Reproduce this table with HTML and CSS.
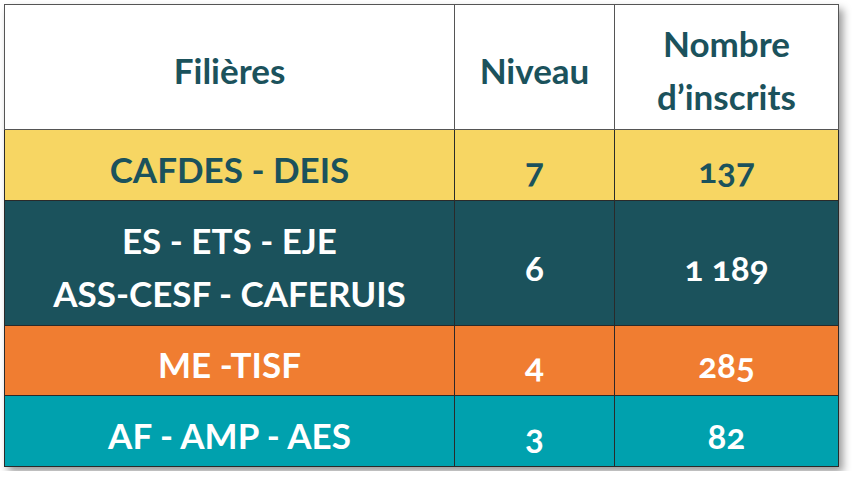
FILE: index.html
```html
<!DOCTYPE html>
<html lang="fr">
<head>
<meta charset="utf-8">
<title>Filières</title>
<link rel="stylesheet" href="styles.css">
</head>
<body>
<table class="tbl">
  <colgroup>
    <col class="c1"><col class="c2"><col class="c3">
  </colgroup>
  <tr class="row head">
    <td><span class="t">Filières</span></td>
    <td><span class="t">Niveau</span></td>
    <td><span class="t two">Nombre<br>d’inscrits</span></td>
  </tr>
  <tr class="row yellow">
    <td><span class="t">CAFDES - DEIS</span></td>
    <td><span class="t num">7</span></td>
    <td><span class="t num">137</span></td>
  </tr>
  <tr class="row dark">
    <td><span class="t two">ES - ETS - EJE<br>ASS-CESF - CAFERUIS</span></td>
    <td><span class="t num">6</span></td>
    <td><span class="t num">1 189</span></td>
  </tr>
  <tr class="row orange">
    <td><span class="t">ME -TISF</span></td>
    <td><span class="t num">4</span></td>
    <td><span class="t num">285</span></td>
  </tr>
  <tr class="row cyan">
    <td><span class="t">AF - AMP - AES</span></td>
    <td><span class="t num">3</span></td>
    <td><span class="t num">82</span></td>
  </tr>
</table>
</body>
</html>
```

FILE: styles.css
```css
html, body {
  margin: 0;
  background: #ffffff;
}
body {
  padding: 4px;
  font-family: "Lato", "Open Sans", sans-serif;
  font-weight: 700;
}
.tbl {
  border-collapse: collapse;
  table-layout: fixed;
  width: 834px;
  border: 1px solid #333;
  box-shadow: 4px 5px 8px rgba(0, 0, 0, 0.4);
}
.c1 { width: 450px; }
.c2 { width: 160px; }
.c3 { width: 224px; }
.tbl td {
  border: 1px solid #2a2a2a;
  text-align: center;
  vertical-align: middle;
  padding: 0;
  font-size: 35px;
  line-height: 53px;
}
.head td { height: 124px; background: #ffffff; color: #1b525c; border-color: #555; }
.yellow td { height: 70px; background: #f7d663; color: #1b525c; }
.dark td { height: 124px; background: #1b525c; color: #ffffff; }
.orange td { height: 69px; background: #f07d31; color: #ffffff; }
.cyan td { height: 70px; background: #00a1ae; color: #ffffff; }
.t { display: inline-block; padding-top: 8px; }
.head .t { padding-top: 6px; }
.num { font-variant-numeric: oldstyle-nums; }
```
